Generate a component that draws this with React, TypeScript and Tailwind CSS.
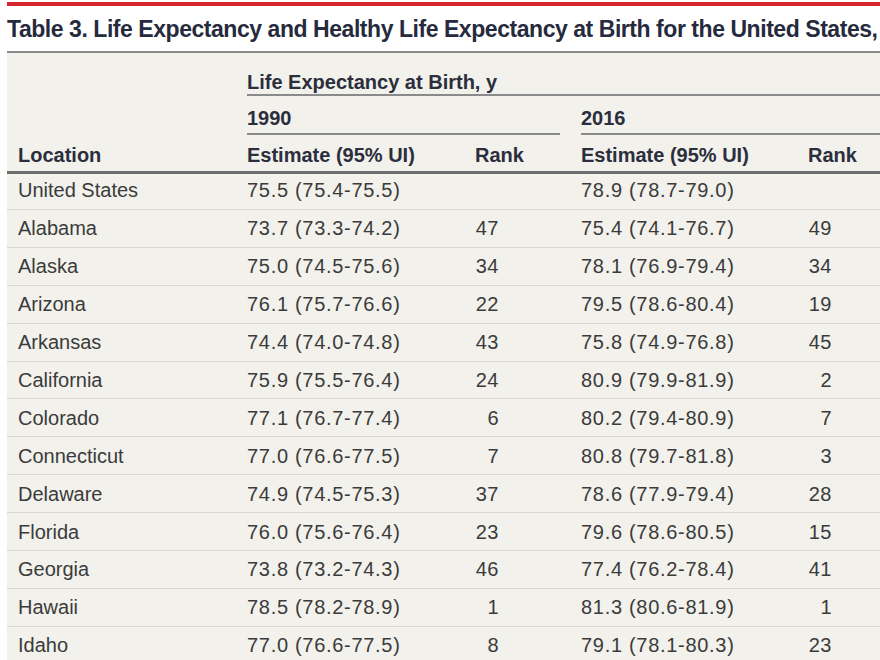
import React from 'react';

const rows: [string, string, string, string, string][] = [
  ['United States', '75.5 (75.4-75.5)', '', '78.9 (78.7-79.0)', ''],
  ['Alabama', '73.7 (73.3-74.2)', '47', '75.4 (74.1-76.7)', '49'],
  ['Alaska', '75.0 (74.5-75.6)', '34', '78.1 (76.9-79.4)', '34'],
  ['Arizona', '76.1 (75.7-76.6)', '22', '79.5 (78.6-80.4)', '19'],
  ['Arkansas', '74.4 (74.0-74.8)', '43', '75.8 (74.9-76.8)', '45'],
  ['California', '75.9 (75.5-76.4)', '24', '80.9 (79.9-81.9)', '2'],
  ['Colorado', '77.1 (76.7-77.4)', '6', '80.2 (79.4-80.9)', '7'],
  ['Connecticut', '77.0 (76.6-77.5)', '7', '80.8 (79.7-81.8)', '3'],
  ['Delaware', '74.9 (74.5-75.3)', '37', '78.6 (77.9-79.4)', '28'],
  ['Florida', '76.0 (75.6-76.4)', '23', '79.6 (78.6-80.5)', '15'],
  ['Georgia', '73.8 (73.2-74.3)', '46', '77.4 (76.2-78.4)', '41'],
  ['Hawaii', '78.5 (78.2-78.9)', '1', '81.3 (80.6-81.9)', '1'],
  ['Idaho', '77.0 (76.6-77.5)', '8', '79.1 (78.1-80.3)', '23'],
];

const cols = 'grid grid-cols-[240px_228px_106px_227px_72px]';

const App = () => {
  return (
    <div className="w-[880px] h-[660px] overflow-hidden bg-white font-['Liberation_Sans',Arial,sans-serif]">
      <div className="ml-[7px] mt-[2px] h-[4px] bg-[#d7262f]" />
      <div className="pl-[7px] pt-[9px] h-[45px] whitespace-nowrap text-[23px] leading-[28px] font-semibold tracking-[-0.45px] text-[#262a3d]">
        Table 3. Life Expectancy and Healthy Life Expectancy at Birth for the United States,
      </div>

      <div className="ml-[7px] bg-[#f2f1ec] border-t-[2px] border-[#8a8a8a] text-[20px]">
        {/* header */}
        <div className={`${cols} font-semibold text-[#2b2e3c]`}>
          <div />
          <div className="col-span-4 h-[43px] pt-[17px] leading-[24px] border-b-[2px] border-[#8a8a8a]">
            Life Expectancy at Birth, y
          </div>

          <div />
          <div className="col-span-2 mr-[21px] h-[39px] pt-[10px] leading-[24px] border-b-[2px] border-[#8a8a8a]">
            1990
          </div>
          <div className="col-span-2 h-[39px] pt-[10px] leading-[24px] border-b-[2px] border-[#8a8a8a]">
            2016
          </div>

          <div className="col-span-5 grid grid-cols-subgrid h-[39px] pt-[8px] leading-[24px] border-b-[3px] border-[#6e6e6e]">
            <div className="pl-[11px]">Location</div>
            <div>Estimate (95% UI)</div>
            <div>Rank</div>
            <div>Estimate (95% UI)</div>
            <div>Rank</div>
          </div>
        </div>

        {/* body */}
        <div className="text-[#3b3b3b]">
          {rows.map(([loc, e1, r1, e2, r2], i) => (
            <div
              key={loc}
              className={`${cols} items-center border-b border-[#d9d7d1] ${i === 0 ? 'h-[36px] pb-[3px]' : 'h-[37.9px]'}`}
            >
              <div className="pl-[11px] leading-[24px]">{loc}</div>
              <div className="leading-[24px] tracking-[0.7px]">{e1}</div>
              <div className="w-[24px] text-right leading-[24px] tracking-[0.5px]">{r1}</div>
              <div className="leading-[24px] tracking-[0.7px]">{e2}</div>
              <div className="w-[24px] text-right leading-[24px] tracking-[0.5px]">{r2}</div>
            </div>
          ))}
        </div>
      </div>
    </div>
  );
};

export default App;
